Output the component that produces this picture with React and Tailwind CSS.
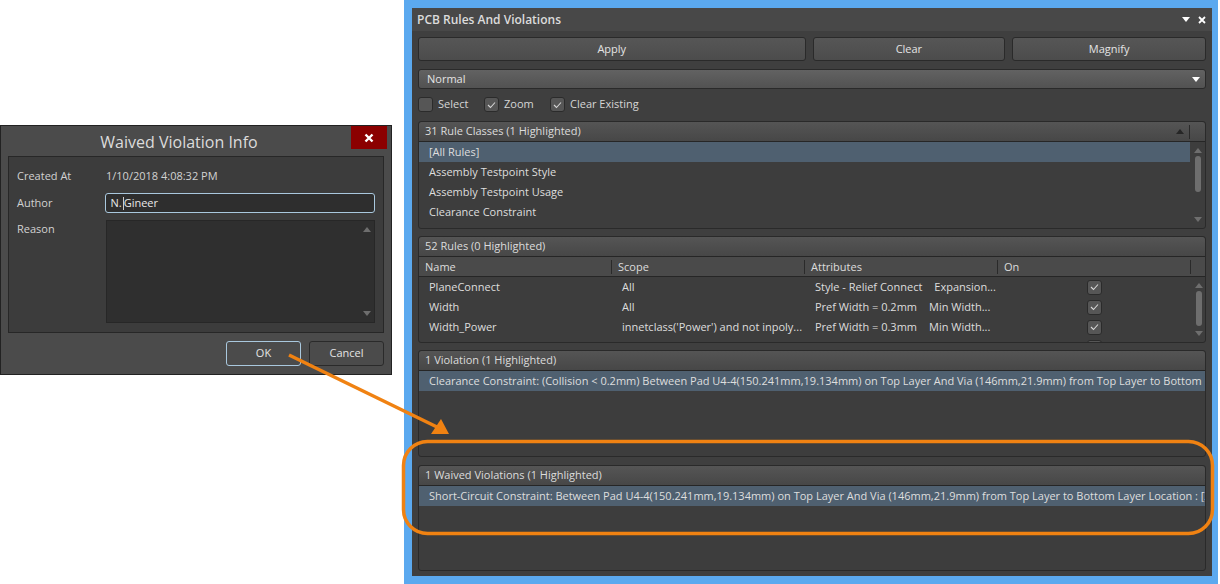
import React from "react";

const Arrow = ({ up, className = "" }) => (
  <svg width="8" height="5" viewBox="0 0 8 5" className={className}>
    <path d={up ? "M4 0 L8 5 L0 5 Z" : "M0 0 L8 0 L4 5 Z"} fill="currentColor" />
  </svg>
);

const Check = () => (
  <svg width="9" height="8" viewBox="0 0 9 8" fill="none">
    <path d="M1 4 L3.5 6.5 L8 1.5" stroke="#d6d6d6" strokeWidth="1.1" />
  </svg>
);

const CheckBox = ({ checked }) => (
  <div className="flex h-[15px] w-[15px] shrink-0 items-center justify-center rounded-[3px] border border-[#2b2b2b] bg-[#565656]">
    {checked && <Check />}
  </div>
);

const Scrollbar = ({ thumb }) => (
  <div className="flex h-full w-[15px] shrink-0 flex-col items-center justify-between py-[6px] text-[#6e6e6e]">
    <Arrow up />
    {thumb && <div className={`w-[6px] flex-1 my-[3px] ${thumb}`} />}
    <Arrow />
  </div>
);

const Button = ({ children, className = "" }) => (
  <button className={`flex items-center justify-center rounded-[3px] border border-[#2a2a2a] bg-gradient-to-b from-[#565656] to-[#4c4c4c] text-[#e4e4e4] ${className}`}>
    {children}
  </button>
);

const SectionHeader = ({ children, right }) => (
  <div className="flex h-[20px] shrink-0 items-center justify-between border-b border-[#262626] bg-gradient-to-b from-[#555555] to-[#474747] pl-[6px] text-[#dcdcdc] rounded-t-[3px]">
    <span>{children}</span>
    {right}
  </div>
);

const Section = ({ title, right, className = "", children }) => (
  <div className={`flex flex-col overflow-hidden rounded-[3px] border border-[#2a2a2a] bg-[#3d3d3d] ${className}`}>
    <SectionHeader right={right}>{title}</SectionHeader>
    {children}
  </div>
);

const Row = ({ active, children }) => (
  <div className={`flex h-[20px] shrink-0 items-center whitespace-nowrap pl-[10px] text-[#dedede] ${active ? "bg-[#4f6070]" : ""}`}>
    {children}
  </div>
);

const ruleRows = [
  ["PlaneConnect", "All", "Style - Relief Connect", "ml-[12px]", "Expansion..."],
  ["Width", "All", "Pref Width = 0.2mm", "ml-[12px]", "Min Width..."],
  ["Width_Power", "innetclass('Power') and not inpoly...", "Pref Width = 0.3mm", "ml-[12px]", "Min Width..."],
];

const WaivedDialog = () => (
  <div className="mt-[125px] flex h-[250px] w-[392px] shrink-0 flex-col border border-[#222222] bg-[#4b4b4b] text-[#d2d2d2]">
    <div className="flex h-[30px] shrink-0 items-start">
      <div className="flex-1 pl-[6px] pt-[4px] text-center text-[16px] text-[#dcdcdc]">Waived Violation Info</div>
      <div className="mr-[4px] flex h-[23px] w-[36px] items-center justify-center bg-[#8b0000] text-white">
        <svg width="10" height="10" viewBox="0 0 10 10">
          <path d="M1.5 1.5 L8.5 8.5 M8.5 1.5 L1.5 8.5" stroke="#fff" strokeWidth="2.4" />
        </svg>
      </div>
    </div>
    <div className="mx-[7px] flex h-[177px] flex-col border border-[#272727] bg-[#3c3c3c] pl-[8px] pr-[8px]">
      <div className="flex h-[20px] mt-[9px] items-center">
        <span className="w-[89px]">Created At</span>
        <span>1/10/2018 4:08:32 PM</span>
      </div>
      <div className="mt-[7px] flex h-[20px] items-center">
        <span className="w-[88px]">Author</span>
        <div className="flex h-[20px] w-[272px] items-center rounded-[3px] border border-[#a9c8de] bg-[#2e2e2e] pl-[5px] text-[#e8e8e8]">
          N. <span className="ml-[1px] mr-[0px] h-[13px] w-[1px] bg-[#cccccc]" />Gineer
        </div>
      </div>
      <div className="mt-[7px] flex items-start">
        <span className="w-[89px] pt-[1px]">Reason</span>
        <div className="flex h-[103px] w-[270px] justify-end border border-[#272727] bg-[#2f2f2f]">
          <Scrollbar />
        </div>
      </div>
    </div>
    <div className="mt-[8px] flex justify-end gap-[8px] pr-[7px]">
      <Button className="h-[25px] w-[75px] border-[#a9c8de] bg-none bg-[#4b4b4b]">OK</Button>
      <Button className="h-[25px] w-[75px] bg-none bg-[#4b4b4b]">Cancel</Button>
    </div>
  </div>
);

const RulesPanel = () => (
  <div className="ml-[12px] flex h-[584px] w-[814px] shrink-0 flex-col border-[8px] border-[#5ba9ef] bg-[#3f3f3f] border-r-[6px] border-b-[8px]">
    <div className="flex h-[23px] shrink-0 items-center justify-between bg-[#484848] pl-[5px] pr-[6px]">
      <span className="text-[12px] font-semibold text-[#dcdcdc]">PCB Rules And Violations</span>
      <div className="flex items-center gap-[8px] text-white">
        <Arrow />
        <svg width="8" height="8" viewBox="0 0 8 8">
          <path d="M1 1 L7 7 M7 1 L1 7" stroke="#fff" strokeWidth="1.8" />
        </svg>
      </div>
    </div>
    <div className="flex flex-1 flex-col pl-[6px] pr-[6px]">
      <div className="mt-[6px] flex gap-[7px]">
        <Button className="h-[24px] w-[388px]">Apply</Button>
        <Button className="h-[24px] w-[193px]">Clear</Button>
        <Button className="h-[24px] w-[194px]">Magnify</Button>
      </div>
      <div className="mt-[8px] flex h-[20px] items-center justify-between rounded-[3px] border border-[#2a2a2a] bg-gradient-to-b from-[#626262] to-[#525252] pl-[8px] pr-[5px] text-[#e4e4e4]">
        <span>Normal</span>
        <Arrow className="text-white" />
      </div>
      <div className="mt-[8px] flex h-[15px] items-center text-[#d6d6d6]">
        <CheckBox />
        <span className="ml-[5px] w-[46px]">Select</span>
        <CheckBox checked />
        <span className="ml-[5px] w-[46px]">Zoom</span>
        <CheckBox checked />
        <span className="ml-[5px]">Clear Existing</span>
      </div>

      <Section
        className="mt-[9px] h-[108px]"
        title="31 Rule Classes (1 Highlighted)"
        right={
          <div className="flex h-full items-center">
            <Arrow up className="text-[#262626]" />
            <div className="ml-[5px] mr-[15px] h-[14px] w-[1px] bg-[#2a2a2a]" />
          </div>
        }
      >
        <div className="flex flex-1 overflow-hidden">
          <div className="flex flex-1 flex-col">
            <Row active>[All Rules]</Row>
            <Row>Assembly Testpoint Style</Row>
            <Row>Assembly Testpoint Usage</Row>
            <Row>Clearance Constraint</Row>
          </div>
          <Scrollbar thumb="rounded-[3px] bg-[#6e6e6e] mb-[25px]" />
        </div>
      </Section>

      <Section className="mt-[7px] h-[107px]" title="52 Rules (0 Highlighted)">
        <div className="grid h-[20px] shrink-0 grid-cols-[193px_193px_193px_193px_15px] items-center border-b border-[#262626] bg-[#4a4a4a] text-[#dcdcdc]">
          <div className="h-[14px] border-r border-[#2a2a2a] pl-[6px] leading-[14px]">Name</div>
          <div className="h-[14px] border-r border-[#2a2a2a] pl-[6px] leading-[14px]">Scope</div>
          <div className="h-[14px] border-r border-[#2a2a2a] pl-[6px] leading-[14px]">Attributes</div>
          <div className="h-[14px] border-r border-[#2a2a2a] pl-[6px] leading-[14px]">On</div>
        </div>
        <div className="flex flex-1 overflow-hidden">
          <div className="flex-1">
            {ruleRows.map((r) => (
              <div key={r[0]} className="grid h-[20px] grid-cols-[193px_193px_193px_193px] items-center whitespace-nowrap text-[#dedede]">
                <span className="pl-[10px]">{r[0]}</span>
                <span className="pl-[10px]">{r[1]}</span>
                <span className="pl-[10px]">
                  {r[2]}
                  <span className={r[3]}>{r[4]}</span>
                </span>
                <div className="flex justify-center pr-[1px]">
                  <CheckBox checked />
                </div>
              </div>
            ))}
            <div className="grid h-[20px] grid-cols-[193px_193px_193px_193px] items-center">
              <span />
              <span />
              <span />
              <div className="flex justify-center pr-[1px]">
                <CheckBox />
              </div>
            </div>
          </div>
          <Scrollbar thumb="rounded-[3px] bg-[#6e6e6e] mb-[5px]" />
        </div>
      </Section>

      <Section className="mt-[7px] h-[107px]" title="1 Violation (1 Highlighted)">
        <Row active>
          Clearance Constraint: (Collision &lt; 0.2mm) Between Pad U4-4(150.241mm,19.134mm) on Top Layer And Via (146mm,21.9mm) from Top Layer to Bottom Layer
        </Row>
      </Section>

      <Section className="mt-[8px] h-[106px]" title="1 Waived Violations (1 Highlighted)">
        <Row active>
          Short-Circuit Constraint: Between Pad U4-4(150.241mm,19.134mm) on Top Layer And Via (146mm,21.9mm) from Top Layer to Bottom Layer Location : [X =...
        </Row>
      </Section>
    </div>
  </div>
);

// callout drawn over both windows
const Callouts = () => (
  <svg className="pointer-events-none absolute inset-0" width="1220" height="584" viewBox="0 0 1220 584" fill="none">
    <rect x="403.5" y="441.5" width="809" height="92" rx="24" stroke="#f08212" strokeWidth="3.5" />
    <path d="M289 355 L437 427" stroke="#f08212" strokeWidth="3.5" />
    <path d="M441 419 L449 434 L431 434 Z" fill="#f08212" />
  </svg>
);

export default function App() {
  return (
    <div
      className="relative flex h-[584px] w-[1220px] items-start overflow-hidden bg-white text-[11px]"
      style={{ fontFamily: '"Open Sans", sans-serif' }}
    >
      <WaivedDialog />
      <RulesPanel />
      <Callouts />
    </div>
  );
}
